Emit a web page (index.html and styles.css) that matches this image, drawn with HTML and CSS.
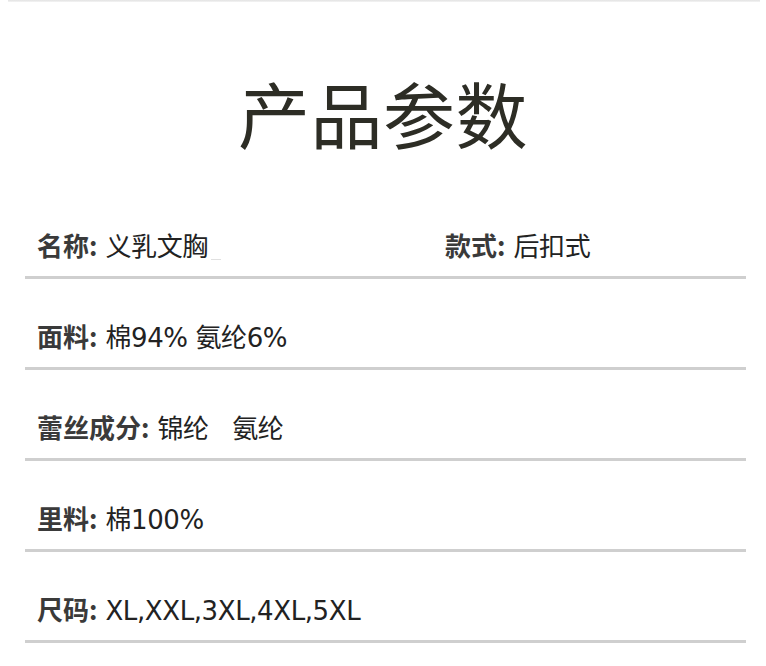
FILE: index.html
```html
<!DOCTYPE html>
<html lang="zh-CN">
<head>
<meta charset="utf-8">
<title>产品参数</title>
<link rel="stylesheet" href="styles.css">
</head>
<body>
<div class="page">
  <div class="topline"></div>
  <h1 class="title">产品参数</h1>
  <div class="params">
    <div class="row two">
      <div class="cell"><span class="label">名称:</span><span class="value">义乳文胸<span class="mark"></span></span></div>
      <div class="cell"><span class="label">款式:</span><span class="value">后扣式</span></div>
    </div>
    <div class="row">
      <div class="cell"><span class="label">面料:</span><span class="value">棉94% 氨纶6%</span></div>
    </div>
    <div class="row">
      <div class="cell"><span class="label">蕾丝成分:</span><span class="value">锦纶&nbsp;&nbsp;&nbsp;氨纶</span></div>
    </div>
    <div class="row">
      <div class="cell"><span class="label">里料:</span><span class="value">棉100%</span></div>
    </div>
    <div class="row">
      <div class="cell"><span class="label">尺码:</span><span class="value">XL,XXL,3XL,4XL,5XL</span></div>
    </div>
  </div>
</div>
</body>
</html>
```

FILE: styles.css
```css
html, body {
  margin: 0;
  padding: 0;
  background: #ffffff;
}
body {
  font-family: "Noto Sans CJK SC", "Noto Sans", sans-serif;
  width: 766px;
  height: 666px;
  overflow: hidden;
}
.page {
  position: relative;
  height: 666px;
}
.topline {
  height: 2px;
  margin: 0 6px 0 8px;
  background: linear-gradient(#e2e2e2, #f4f4f4);
}
.title {
  margin: 0;
  height: 186px;
  box-sizing: border-box;
  padding-top: 74px;
  font-size: 72px;
  line-height: 72px;
  font-weight: 400;
  color: #2d2d25;
  text-align: center;
  letter-spacing: 0.5px;
}
.params {
  margin: 0 20px 0 25px;
}
.row {
  height: 88px;
  box-sizing: content-box;
  border-bottom: 3px solid #cfcfcf;
  padding-left: 12px;
  display: grid;
  grid-template-columns: 1fr;
}
.row.two {
  grid-template-columns: 408px 1fr;
}
.cell {
  padding-top: 44px;
  font-size: 26px;
  line-height: 26px;
  white-space: nowrap;
}
.label {
  font-weight: 700;
  color: #3a3a3a;
}
.value {
  margin-left: 8px;
  color: #222222;
  font-weight: 400;
  font-family: "DejaVu Sans", "Noto Sans CJK SC", sans-serif;
  letter-spacing: -0.4px;
}
.mark {
  display: inline-block;
  width: 10px;
  height: 1px;
  margin-left: 3px;
  background: #e0e0e0;
  vertical-align: -4px;
}
```
